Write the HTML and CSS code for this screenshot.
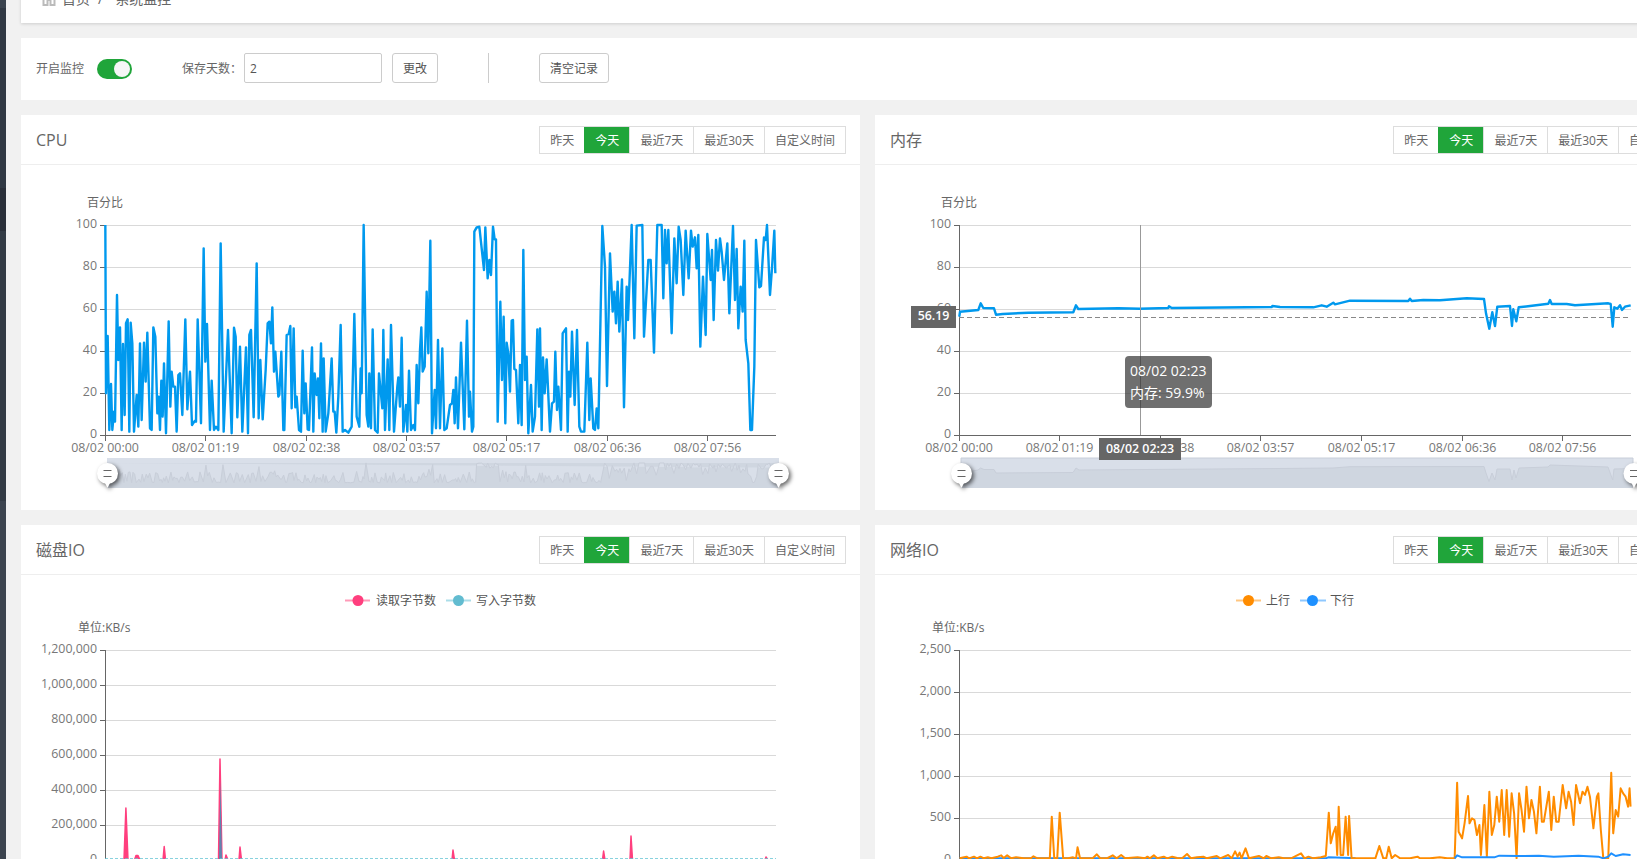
FILE: index.html
```html
<!DOCTYPE html>
<html lang="zh-CN">
<head>
<meta charset="utf-8">
<title>系统监控</title>
<link rel="stylesheet" href="styles.css">
</head>
<body>
<aside class="sidebar">
  <div class="side-a"></div>
  <div class="side-b"></div>
  <div class="side-c"></div>
  <div class="side-d"></div>
  <div class="side-e"></div>
</aside>
<main class="main">
  <nav class="card crumb">
    <svg class="home" viewBox="0 0 16 16" width="16" height="16"><path d="M1 8 8 1l7 7M2.500 7v8h4v-5h3v5h4V7" fill="none" stroke="#bbb" stroke-width="2"/></svg>
    <span>首页</span><span class="sep">/</span><span>系统监控</span>
  </nav>
  <section class="card toolbar">
    <span class="lbl">开启监控</span>
    <span class="switch"><span class="knob"></span></span>
    <span class="lbl days">保存天数：</span>
    <input class="input" type="text" value="2">
    <button class="btn change">更改</button>
    <span class="divider"></span>
    <button class="btn">清空记录</button>
  </section>
  <div class="grid">
    <section class="card panel">
      <header class="head">
        <h3 class="title">CPU</h3>
        <div class="tabs"><span class="tab">昨天</span><span class="tab on">今天</span><span class="tab">最近7天</span><span class="tab">最近30天</span><span class="tab">自定义时间</span></div>
      </header>
      <div class="chart">
        <svg width="839" height="345" viewBox="21 165 839 345">
          <defs>
            <path id="cpu" class="trace" d="M316 135L318 640 323 468 328 750 333 612 337 750 342 695 345 725 351 345 355 540 360 442 365 750 369 492 374 705 378 430 383 418 388 755 392 428 397 490 402 755 410 645 415 740 420 490 425 720 432 488 437 605 442 458 450 745 455 750 460 442 466 470 472 700 476 650 480 750 484 602 488 710 492 550 498 760 506 424 511 680 515 575 520 620 525 620 530 755 535 585 540 580 547 705 556 418 562 688 570 575 576 735 585 722 588 725 593 418 603 730 611 205 616 545 621 432 630 750 635 602 642 750 648 740 655 750 662 190 671 755 684 450 695 760 702 443 707 470 712 712 720 500 727 755 738 502 744 760 748 465 753 450 761 712 770 250 776 715 781 540 788 718 797 570 803 430 808 425 813 490 817 382 822 575 826 515 835 650 838 645 844 515 850 750 853 750 860 465 866 462 871 438 875 685 881 445 886 682 890 650 897 750 903 755 908 512 913 700 917 610 923 748 927 750 936 502 940 755 944 580 950 645 954 595 958 715 963 490 968 755 971 535 977 755 985 700 995 535 1000 695 1004 695 1009 758 1015 650 1022 435 1028 755 1035 750 1045 758 1055 740 1063 402 1070 710 1078 740 1082 565 1085 640 1091 135 1100 705 1105 740 1108 580 1113 745 1118 448 1125 750 1133 758 1137 580 1147 685 1150 450 1155 750 1163 538 1168 750 1173 435 1182 755 1192 620 1195 592 1200 680 1205 473 1210 755 1218 675 1222 755 1227 572 1233 750 1240 735 1245 750 1250 555 1255 670 1260 510 1264 442 1268 575 1274 560 1280 335 1285 520 1291 182 1296 760 1304 630 1308 745 1314 480 1320 745 1327 505 1333 750 1340 745 1350 675 1356 670 1360 630 1364 730 1368 592 1374 745 1383 488 1393 748 1401 422 1407 710 1410 635 1416 755 1420 740 1423 155 1430 142 1438 140 1452 270 1456 142 1463 295 1468 240 1473 285 1479 140 1484 178 1488 178 1493 725 1501 365 1506 600 1511 410 1516 730 1520 488 1525 520 1530 635 1535 422 1539 420 1543 567 1548 570 1555 730 1560 555 1565 735 1570 210 1575 600 1580 530 1585 760 1593 615 1598 755 1605 710 1612 448 1617 680 1620 445 1625 750 1629 532 1634 640 1640 538 1650 755 1656 670 1662 665 1666 515 1671 690 1675 620 1683 750 1688 460 1698 445 1703 755 1707 575 1711 650 1716 455 1724 675 1731 450 1738 740 1743 755 1753 755 1762 488 1768 720 1772 595 1780 745 1785 750 1790 685 1795 745 1807 138 1815 260 1821 618 1830 220 1838 395 1843 335 1848 430 1853 305 1858 455 1866 298 1872 682 1880 320 1884 420 1895 135 1903 475 1910 137 1927 135 1932 470 1945 240 1952 240 1962 518 1972 135 1985 135 1990 355 1995 150 2000 250 2005 150 2015 460 2023 175 2030 310 2036 140 2042 180 2050 345 2057 152 2066 295 2073 152 2078 200 2085 172 2090 265 2095 165 2101 500 2109 290 2117 465 2122 162 2132 300 2136 210 2141 420 2148 180 2154 272 2160 175 2165 215 2172 300 2182 190 2188 400 2199 138 2205 360 2210 207 2215 445 2222 320 2228 395 2233 182 2237 480 2245 550 2251 750 2256 750 2263 560 2268 180 2278 322 2283 318 2292 172 2297 180 2301 135 2310 345 2316 265 2323 152 2326 280"/>
          </defs>
          <g class="grid-lines">
            <path d="M105 225.500H776M105 267.500H776M105 309.500H776M105 351.500H776M105 393.500H776"/>
          </g>
          <path class="axis" d="M105.500 225V435.500M100 225.500H105M100 267.500H105M100 309.500H105M100 351.500H105M100 393.500H105M100 435.500H776M105.500 435V441M205.500 435V441M306.500 435V441M406.500 435V441M506.500 435V441M607.500 435V441M707.500 435V441"/>
          <g class="ylab">
            <text x="97" y="228">100</text><text x="97" y="270">80</text><text x="97" y="312">60</text><text x="97" y="354">40</text><text x="97" y="396">20</text><text x="97" y="438">0</text>
          </g>
          <text class="ttl" x="87" y="207">百分比</text>
          <g class="xlab">
            <text x="105" y="452">08/02 00:00</text><text x="205.500" y="452">08/02 01:19</text><text x="306.500" y="452">08/02 02:38</text><text x="406.500" y="452">08/02 03:57</text><text x="506.500" y="452">08/02 05:17</text><text x="607.500" y="452">08/02 06:36</text><text x="707.500" y="452">08/02 07:56</text>
          </g>
          <use href="#cpu" class="line-cpu" transform="translate(0 180) scale(.33333)"/>
          <rect class="sl-light" x="107" y="458" width="672" height="30"/>
          <rect class="sl-dark" x="107" y="463" width="672" height="25"/>
          <use href="#cpu" class="sl-shadow" transform="translate(2.300 458.700) scale(.33333 .0317)"/>
          <g class="handle"><circle cx="107.500" cy="473.500" r="10.500"/><path d="M107.500 488l-2.500-5h5z"/></g>
          <path class="grip" d="M103.500 470.500h8M103.500 476.500h8"/>
          <g class="handle"><circle cx="778.500" cy="473.500" r="10.500"/><path d="M778.500 488l-2.500-5h5z"/></g>
          <path class="grip" d="M774.500 470.500h8M774.500 476.500h8"/>
        </svg>
      </div>
    </section>
    <section class="card panel">
      <header class="head">
        <h3 class="title">内存</h3>
        <div class="tabs"><span class="tab">昨天</span><span class="tab on">今天</span><span class="tab">最近7天</span><span class="tab">最近30天</span><span class="tab">自定义时间</span></div>
      </header>
      <div class="chart">
        <svg width="839" height="345" viewBox="875 165 839 345">
          <g class="grid-lines">
            <path d="M959 225.500H1631M959 267.500H1631M959 309.500H1631M959 351.500H1631M959 393.500H1631"/>
          </g>
          <path class="axis" d="M959.500 225V435.500M954 225.500H959M954 267.500H959M954 309.500H959M954 351.500H959M954 393.500H959M954 435.500H1631M959.500 435V441M1059.500 435V441M1160.500 435V441M1260.500 435V441M1361.500 435V441M1462.500 435V441M1562.500 435V441"/>
          <g class="ylab">
            <text x="951" y="228">100</text><text x="951" y="270">80</text><text x="951" y="312">60</text><text x="951" y="354">40</text><text x="951" y="396">20</text><text x="951" y="438">0</text>
          </g>
          <text class="ttl" x="941" y="207">百分比</text>
          <g class="xlab">
            <text x="959" y="452">08/02 00:00</text><text x="1059.500" y="452">08/02 01:19</text><text x="1160.500" y="452">08/02 02:38</text><text x="1260.500" y="452">08/02 03:57</text><text x="1361.500" y="452">08/02 05:17</text><text x="1462.500" y="452">08/02 06:36</text><text x="1562.500" y="452">08/02 07:56</text>
          </g>
          <path class="mark" d="M959 317.500H1631"/>
          <polyline class="line-cpu" points="959.300,316.700 960,311.700 978.300,310 980.700,303.300 983.300,308 994,308.300 996,314.700 1002.700,314 1028.300,312.700 1073.300,312.300 1076,305.300 1078.300,309 1118.300,308.300 1140,308.700 1168.300,308 1169,306.300 1171.700,308 1271.700,307 1272.400,306 1280,307 1313.300,307.300 1321.700,305.300 1326.700,306.700 1333.300,302.700 1335,304.300 1350,300.700 1408.300,301 1410,298.700 1411.700,301 1423.300,300 1440,300.300 1466.700,298.300 1484,299 1486,313.300 1489.300,328.700 1492.300,312.300 1495,326 1497.300,306.700 1510,306 1512,326 1513.300,309.300 1516.300,321.300 1518.700,307.300 1530,306 1548.300,303.700 1550,300 1551.700,304 1566.700,304 1575,305.300 1608.300,303.300 1610.700,304 1612.700,326.700 1614.300,307.300 1617.300,308.700 1620,305.300 1622,310 1625,306.700 1630.700,305.300"/>
          <path class="cross" d="M1140.500 225V435"/>
          <rect class="sl-dark" x="961" y="458" width="672" height="30"/>
          <polygon class="sl-top" points="961,458 961,473 978,470 980.500,468 984,469.500 994,469.500 996,473 1073,472.500 1076,468 1079,470 1280,468.500 1333,468 1350,466.700 1484,466.500 1486,473 1489,481.500 1492,473 1495,480 1497,469 1510,469 1512,480 1514,470 1516,478 1519,468 1548,467 1550,465 1608,467 1612.700,480 1614,469 1633,468.500 1633,458"/>
          <g class="handle"><circle cx="961.500" cy="473.500" r="10.500"/><path d="M961.500 488l-2.500-5h5z"/></g>
          <path class="grip" d="M957.500 470.500h8M957.500 476.500h8"/>
          <g class="handle"><circle cx="1634" cy="473.500" r="10.500"/><path d="M1634 488l-2.500-5h5z"/></g>
          <path class="grip" d="M1630 470.500h8M1630 476.500h8"/>
          <rect class="pointer" x="911" y="306" width="45" height="22"/>
          <text class="ptext" x="933.500" y="320">56.19</text>
          <rect class="pointer" x="1099" y="438" width="82" height="22"/>
          <text class="ptext" x="1140" y="452.500">08/02 02:23</text>
        </svg>
        <div class="tip">08/02 02:23<br>内存: 59.9%</div>
      </div>
    </section>
    <section class="card panel">
      <header class="head">
        <h3 class="title">磁盘IO</h3>
        <div class="tabs"><span class="tab">昨天</span><span class="tab on">今天</span><span class="tab">最近7天</span><span class="tab">最近30天</span><span class="tab">自定义时间</span></div>
      </header>
      <div class="chart">
        <svg width="839" height="345" viewBox="21 575 839 345">
          <path class="leg-read" d="M345 600.500H370"/><circle class="dot-read" cx="358" cy="600.500" r="5.500"/>
          <text class="leg" x="376" y="605">读取字节数</text>
          <path class="leg-write" d="M446 600.500H471"/><circle class="dot-write" cx="458.500" cy="600.500" r="5.500"/>
          <text class="leg" x="476" y="605">写入字节数</text>
          <text class="ttl" x="78" y="632">单位:KB/s</text>
          <g class="grid-lines">
            <path d="M105 650.500H776M105 685.500H776M105 720.500H776M105 755.500H776M105 790.500H776M105 825.500H776"/>
          </g>
          <path class="axis" d="M105.500 650V860M100 650.500H105M100 685.500H105M100 720.500H105M100 755.500H105M100 790.500H105M100 825.500H105"/>
          <g class="ylab">
            <text x="97" y="653">1,200,000</text><text x="97" y="688">1,000,000</text><text x="97" y="723">800,000</text><text x="97" y="758">600,000</text><text x="97" y="793">400,000</text><text x="97" y="828">200,000</text><text x="97" y="863">0</text>
          </g>
          <path class="spike-read" d="M124 860 125.900 808 128 860ZM134.500 860 136 855.500 138 855.500 140 860ZM163 860 164.200 846.500 165.500 860ZM218.500 860 220 759 222 860ZM225 860 226 855 228 860ZM239 860 240 847 241.500 860ZM452 860 453 850 454.500 860ZM602.500 860 603.600 851 605 860ZM630 860 631 836 632.500 860ZM765 860 766 857 768 860Z"/>
          <path class="spike-both" d="M219 860 220.400 780 222 860Z"/>
          <path class="base-write" d="M105 859H776"/>
        </svg>
      </div>
    </section>
    <section class="card panel">
      <header class="head">
        <h3 class="title">网络IO</h3>
        <div class="tabs"><span class="tab">昨天</span><span class="tab on">今天</span><span class="tab">最近7天</span><span class="tab">最近30天</span><span class="tab">自定义时间</span></div>
      </header>
      <div class="chart">
        <svg width="839" height="345" viewBox="875 575 839 345">
          <path class="leg-up" d="M1236 600.500H1261"/><circle class="dot-up" cx="1248.500" cy="600.500" r="5.500"/>
          <text class="leg" x="1266" y="605">上行</text>
          <path class="leg-down" d="M1300 600.500H1326"/><circle class="dot-down" cx="1312.500" cy="600.500" r="5.500"/>
          <text class="leg" x="1330" y="605">下行</text>
          <text class="ttl" x="932" y="632">单位:KB/s</text>
          <g class="grid-lines">
            <path d="M959 650.500H1631M959 692.500H1631M959 734.500H1631M959 776.500H1631M959 818.500H1631"/>
          </g>
          <path class="axis" d="M959.500 650V860M954 650.500H959M954 692.500H959M954 734.500H959M954 776.500H959M954 818.500H959"/>
          <g class="ylab">
            <text x="951" y="653">2,500</text><text x="951" y="695">2,000</text><text x="951" y="737">1,500</text><text x="951" y="779">1,000</text><text x="951" y="821">500</text><text x="951" y="863">0</text>
          </g>
          <g transform="translate(860 520) scale(.49554 .33333)">
            <polyline class="line-down" points="201,1015 940,1015 945,1012 990,1014 1000,1015"/>
            <polyline class="line-up" points="201,1015 215,1010 220,1015 230,1010 236,1015 243,1010 250,1015 258,1012 265,1015 278,1010 285,1006 290,1014 297,1006 305,1015 315,1012 330,1015 345,1015 350,1009 358,1015 383,1015 387,890 392,1015 398,1015 403,878 410,1015 420,1015 430,1012 436,1015 439,982 444,1015 460,1015 470,1014 478,1003 485,1015 500,1014 510,1006 518,1015 527,1005 535,1015 560,1012 575,1015 580,1010 585,1015 593,1006 600,1015 613,1010 620,1015 630,1010 640,1014 650,1015 660,1002 668,1015 680,1012 693,1010 700,1015 720,1008 727,1015 743,1005 750,1015 757,994 762,1010 766,998 770,1015 778,985 785,1015 805,1008 815,1015 820,1008 830,1015 845,1012 855,1015 870,1015 890,1000 897,1015 905,1010 915,1015 930,1012 940,1008 946,878 950,970 955,940 960,920 963,1005 966,860 970,1005 975,1005 980,890 985,1005 987,888 992,1015 1000,1015 1040,1015 1048,978 1056,1015 1062,1015 1067,980 1073,1015 1080,1005 1090,1015 1110,1015 1125,1010 1130,1015 1150,1015 1170,1012 1185,1015 1200,1015 1205,788 1208,935 1215,955 1220,910 1227,828 1230,910 1235,895 1240,900 1245,945 1250,915 1253,1005 1260,855 1265,1010 1270,815 1275,945 1280,915 1285,830 1290,905 1295,810 1300,945 1305,810 1310,950 1315,820 1320,880 1325,1015 1330,820 1335,870 1340,935 1345,800 1350,895 1355,840 1360,875 1365,940 1372,800 1376,905 1380,905 1390,815 1395,930 1400,830 1405,905 1410,905 1418,795 1425,865 1430,815 1435,845 1440,915 1445,795 1453,850 1458,815 1463,825 1468,800 1473,830 1480,925 1487,830 1490,820 1495,930 1500,1015 1510,1015 1516,758 1520,940 1525,870 1530,890 1535,805 1540,820 1545,830 1550,860 1553,805 1555,860"/>
            <polyline class="line-down" points="1200,1015 1205,1006 1215,1012 1240,1012 1280,1012 1290,1007 1330,1008 1370,1007 1400,1010 1450,1007 1490,1010 1500,1015 1510,1010 1516,1000 1525,1008 1540,1003 1555,1005"/>
          </g>
        </svg>
      </div>
    </section>
  </div>
</main>
</body>
</html>
```
FILE: styles.css
```css
* { box-sizing: border-box; }
html, body { margin: 0; height: 859px; overflow: hidden; }
body {
  display: flex;
  background: #f1f1f1;
  font-family: "Open Sans", "Noto Sans CJK SC", sans-serif;
  color: #666;
  font-size: 12px;
}
.sidebar { flex: 0 0 6px; display: flex; flex-direction: column; }
.side-a { height: 8px; background: #3a434e; }
.side-b { height: 180px; background: #303843; }
.side-c { height: 43px; background: #2a2f39; }
.side-d { height: 270px; background: #333b45; }
.side-e { flex: 1; background: #3c444f; }

.main {
  flex: 0 0 1693px;
  margin: -27px 0 0 15px;
  display: flex;
  flex-direction: column;
  gap: 15px;
}
.card { background: #fff; }
.crumb {
  height: 50px;
  flex: none;
  display: flex;
  align-items: center;
  padding-left: 20px;
  font-size: 14px;
  box-shadow: 0 1px 3px rgba(0,0,0,.15);
}
.home { margin-right: 5px; }
.sep { margin: 0 12px 0 8px; }

.toolbar {
  height: 62px;
  flex: none;
  display: flex;
  align-items: flex-start;
  padding: 15px;
}
.lbl { line-height: 30px; margin-top: 1px; }
.switch {
  width: 35px;
  height: 20px;
  margin: 6px 0 0 13px;
  border-radius: 10px;
  background: #20a53a;
  display: flex;
  justify-content: flex-end;
  align-items: center;
  padding-right: 2px;
}
.knob { width: 16px; height: 16px; border-radius: 50%; background: #f6f6f6; }
.days { margin-left: 50px; margin-right: 2px; }
.input {
  width: 138px;
  height: 30px;
  border: 1px solid #ccc;
  border-radius: 2px;
  padding: 0 5px;
  font: 12px "Open Sans", sans-serif;
  color: #555;
  background: #fff;
}
.btn {
  height: 30px;
  padding: 0 10px;
  border: 1px solid #ccc;
  border-radius: 3px;
  background: #fff;
  color: #555;
  font: 12px "Open Sans", "Noto Sans CJK SC", sans-serif;
}
.change { margin-left: 10px; }
.divider { width: 1px; height: 30px; background: #ccc; margin: 0 50px; }

.grid {
  display: grid;
  grid-template-columns: 839px 839px;
  gap: 15px;
}
.panel { height: 395px; }
.head {
  height: 50px;
  display: flex;
  justify-content: space-between;
  align-items: center;
  padding: 0 14px 0 15px;
  border-bottom: 1px solid #eee;
}
.title { margin: 0; font-size: 16px; line-height: 22px; font-weight: 400; color: #666; }
.tabs { display: flex; height: 28px; border: 1px solid #ddd; }
.tab {
  padding: 0 10px;
  line-height: 28px;
  height: 26px;
  border-left: 1px solid #ddd;
  color: #666;
}
.tab:first-child { border-left: 0; }
.tab.on { background: #20a53a; color: #fff; border-left-color: #20a53a; }

.chart { position: relative; height: 345px; }
.chart svg { display: block; overflow: hidden; }
.chart text { font-family: "Open Sans", "Noto Sans CJK SC", sans-serif; font-size: 12.4px; }
.grid-lines path { fill: none; stroke: #d9d9d9; stroke-width: 1; }
.axis { fill: none; stroke: #666; stroke-width: 1; }
.ylab text { fill: #777; text-anchor: end; }
.xlab text { fill: #777; text-anchor: middle; }
.chart .ttl { fill: #666; font-size: 12px; }
.chart .leg { fill: #555; font-size: 12px; }

.trace { vector-effect: non-scaling-stroke; }
.line-cpu { fill: none; stroke: #0099ee; stroke-width: 2.4; stroke-linejoin: round; }
.sl-light, .sl-top { fill: #d9dfe9; }
.sl-top { stroke: #c8ced9; stroke-width: 1; }
.sl-dark { fill: #cfd6e0; }
.sl-shadow { fill: #d9dfe9; stroke: #c8ced9; stroke-width: 1; }
.handle { fill: #fff; filter: drop-shadow(2px 2px 2px rgba(0,0,0,.6)); }
.grip { fill: none; stroke: #666; stroke-width: 1; }

.mark { fill: none; stroke: #888; stroke-width: 1; stroke-dasharray: 5 3; }
.cross { fill: none; stroke: #999; stroke-width: 1; }
.pointer { fill: #666; }
.chart .ptext { fill: #fff; text-anchor: middle; font-weight: 600; }
.tip {
  position: absolute;
  left: 250px;
  top: 191px;
  width: 87px;
  height: 52px;
  padding: 4px 5px;
  border-radius: 4px;
  background: rgba(50,50,50,.7);
  color: #fff;
  font-size: 14px;
  line-height: 22px;
  white-space: nowrap;
}

.leg-read { stroke: #ff9ab8; stroke-width: 2; }
.dot-read { fill: #ff3f7e; }
.leg-write { stroke: #aadde8; stroke-width: 2; }
.dot-write { fill: #62bcd0; }
.leg-up { stroke: #ffc680; stroke-width: 2; }
.dot-up { fill: #ff8c00; }
.leg-down { stroke: #8fc8ff; stroke-width: 2; }
.dot-down { fill: #1e90ff; }
.spike-read { fill: #ff3f7e; stroke: #ff3f7e; stroke-width: 1.5; stroke-linejoin: round; }
.spike-both { fill: #5f86b0; }
.base-write { fill: none; stroke: #62c4d4; stroke-width: 1.500; stroke-dasharray: 3 2; }
.line-up, .line-down { fill: none; stroke-width: 2; stroke-linejoin: round; vector-effect: non-scaling-stroke; }
.line-up { stroke: #ff8c00; }
.line-down { stroke: #1e90ff; }
```
